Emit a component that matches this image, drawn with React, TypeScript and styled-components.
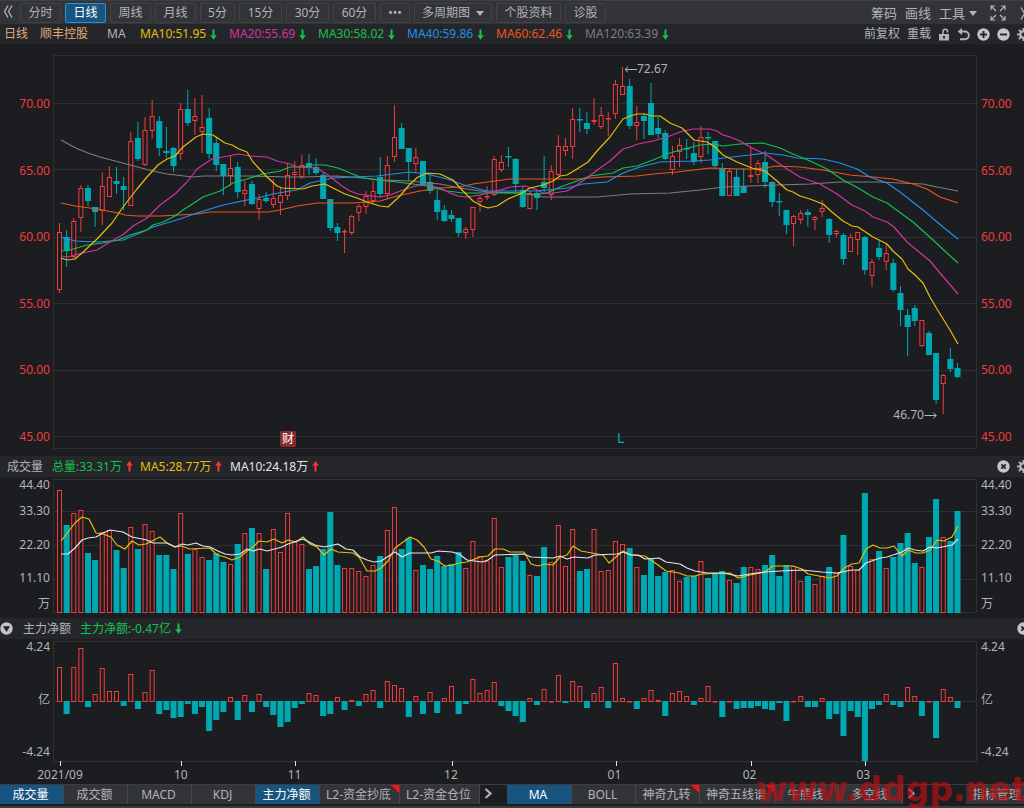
import React from "react";
import styled, { createGlobalStyle } from "styled-components";

const c = {
  bg: "#1c1d21",
  bar: "#333438",
  strip: "#25262a",
  line: "#2e3034",
  text: "#b2b3b7",
  red: "#f23b3b",
  teal: "#00a8b2",
  green: "#12c24e",
  yellow: "#e6be0a",
  magenta: "#d2349f",
  blue: "#2090e8",
  orange: "#ea5620",
  grey: "#7c7e82",
  white: "#e4e5e8",
  active: "#185480",
};

const GlobalStyle = createGlobalStyle`
  * { box-sizing: border-box; }
  body {
    margin: 0;
    background: ${c.bg};
    color: ${c.text};
    font: 12px/16px "Noto Sans", "Noto Sans CJK SC", sans-serif;
  }
  button, select { font: inherit; color: inherit; }
`;

/* ---------- data: one entry per trading session ---------- */

type Session = [up: 0 | 1, high: number, top: number, bottom: number, low: number];

const sessions: Session[] = [
  [1, 223, 232, 290, 293], [0, 230, 237, 251, 267], [1, 218, 221, 257, 259], [1, 185, 188, 218, 232],
  [0, 185, 188, 201, 206], [0, 207, 207, 212, 227], [1, 172, 186, 211, 225], [1, 166, 177, 197, 197],
  [0, 167, 181, 184, 194], [0, 177, 186, 190, 210], [1, 132, 141, 206, 206], [0, 122, 138, 159, 161],
  [1, 117, 130, 165, 166], [1, 100, 116, 131, 139], [0, 116, 121, 148, 156], [0, 127, 151, 153, 158],
  [0, 147, 148, 166, 172], [1, 103, 109, 154, 160], [0, 90, 109, 123, 126], [1, 98, 116, 121, 135],
  [1, 95, 127, 132, 153], [0, 108, 118, 154, 159], [0, 138, 143, 165, 171], [0, 164, 164, 176, 195],
  [1, 155, 168, 176, 186], [0, 162, 167, 192, 198], [1, 181, 190, 194, 206], [0, 181, 184, 204, 205],
  [1, 194, 199, 209, 220], [0, 192, 198, 201, 203], [1, 179, 198, 205, 208], [1, 188, 195, 203, 215],
  [1, 163, 175, 196, 200], [1, 161, 172, 175, 188], [1, 155, 165, 177, 179], [0, 154, 163, 168, 175],
  [0, 158, 167, 173, 175], [0, 173, 175, 199, 199], [0, 199, 199, 228, 231], [0, 223, 227, 233, 241],
  [1, 229, 231, 232, 253], [1, 215, 216, 233, 235], [1, 204, 206, 213, 221], [1, 191, 196, 207, 214],
  [1, 181, 191, 201, 204], [0, 157, 177, 194, 198], [1, 156, 165, 194, 199], [1, 105, 137, 157, 162],
  [0, 123, 128, 149, 149], [0, 148, 148, 162, 181], [1, 148, 157, 164, 172], [0, 161, 161, 185, 186],
  [0, 173, 182, 191, 194], [0, 190, 200, 212, 220], [0, 205, 210, 221, 222], [0, 210, 215, 219, 222],
  [0, 218, 218, 233, 237], [1, 227, 229, 233, 239], [1, 207, 207, 230, 237], [1, 195, 198, 202, 212],
  [1, 186, 196, 197, 200], [1, 156, 159, 195, 196], [1, 155, 162, 170, 172], [0, 147, 156, 157, 167],
  [0, 158, 159, 184, 193], [0, 186, 190, 207, 208], [1, 191, 193, 209, 209], [0, 190, 193, 198, 210],
  [0, 156, 182, 188, 192], [1, 165, 171, 195, 200], [1, 135, 146, 175, 176], [1, 138, 146, 151, 156],
  [1, 108, 119, 147, 159], [0, 108, 119, 120, 132], [0, 112, 123, 129, 134], [1, 98, 120, 122, 125],
  [1, 107, 115, 127, 129], [1, 112, 118, 119, 136], [1, 80, 84, 114, 119], [1, 67, 86, 95, 95],
  [0, 79, 86, 126, 129], [1, 106, 122, 126, 140], [0, 113, 116, 121, 139], [0, 83, 103, 135, 135],
  [0, 117, 128, 134, 138], [0, 130, 133, 159, 160], [1, 146, 156, 170, 175], [1, 138, 145, 152, 167],
  [0, 139, 148, 149, 159], [0, 142, 153, 162, 165], [1, 126, 137, 157, 163], [0, 132, 137, 138, 154],
  [0, 141, 141, 166, 169], [0, 163, 169, 196, 196], [1, 169, 171, 196, 196], [0, 169, 177, 196, 196],
  [0, 168, 186, 193, 193], [1, 147, 175, 177, 183], [1, 160, 163, 175, 183], [0, 151, 162, 182, 188],
  [0, 181, 182, 202, 207], [0, 193, 201, 202, 216], [0, 210, 210, 225, 234], [1, 215, 216, 224, 246],
  [1, 210, 213, 220, 224], [0, 209, 212, 215, 227], [1, 216, 217, 220, 230], [1, 200, 208, 212, 217],
  [0, 218, 219, 235, 243], [1, 230, 231, 234, 237], [0, 233, 235, 259, 265], [1, 234, 237, 252, 252],
  [1, 232, 232, 240, 255], [0, 236, 237, 270, 275], [1, 259, 262, 276, 287], [0, 241, 248, 257, 260],
  [1, 244, 253, 262, 270], [0, 259, 263, 290, 292], [0, 286, 293, 310, 326], [0, 309, 315, 327, 356],
  [0, 305, 308, 321, 326], [1, 320, 320, 346, 347], [0, 331, 333, 355, 355], [0, 353, 353, 400, 404],
  [1, 374, 375, 384, 414], [0, 348, 359, 369, 372], [0, 363, 368, 377, 378],
];

const volumeTops = [
  490, 525, 513, 510, 553, 560, 532, 530, 550, 568, 527, 549, 524, 531, 555, 555, 569, 513, 554, 549,
  557, 560, 553, 562, 564, 544, 533, 528, 533, 569, 529, 552, 513, 542, 544, 569, 566, 549, 512, 565,
  568, 568, 571, 576, 565, 556, 530, 507, 549, 538, 570, 565, 569, 556, 566, 564, 552, 568, 541, 556,
  561, 518, 567, 557, 555, 561, 575, 576, 547, 562, 525, 566, 529, 571, 569, 529, 571, 570, 541, 544,
  548, 567, 575, 559, 576, 572, 570, 581, 577, 576, 561, 578, 573, 571, 580, 583, 567, 567, 569, 565,
  555, 576, 565, 566, 581, 576, 584, 576, 567, 573, 535, 566, 570, 493, 559, 551, 568, 557, 543, 533,
  563, 567, 537, 499, 537, 541, 511,
];

const netFlow = [
  34, -13, 34, 53, -6, 7, 33, 10, 10, -5, 27, -8, 9, 31, -13, -9, -17, -16, -3, -13, -6, -30, -19, -11,
  4, -19, 6, -11, 7, -6, -14, -26, -21, -7, -3, 8, 6, -15, -13, 4, -9, 1, -5, 7, 11, -7, 20, 16, 13,
  -16, 5, -13, 9, -12, 3, 15, -13, -3, 22, 8, 11, 19, -5, -10, -15, -21, 3, -4, 12, 0, 26, -2, 20, 15,
  -7, 8, 14, -7, 38, 3, 0, -8, 3, 11, 1, -15, 8, 10, 5, -4, 3, 15, 0, -16, 0, -8, -7, -7, -5, -8, -9,
  -2, -20, 0, 5, -6, -6, 3, -18, -13, -35, -10, -16, -60, -8, -4, 7, -4, -6, 14, 5, -15, 0, -37, 12,
  4, -7,
];

const priceLines: [string, string][] = [
  [c.grey, "61,140 72,146 78,149 88,153 100,157 130,165 153,171 167,174 193,177 203,176 250,176 290,177 303,177 337,176 363,178 383,180 410,181 440,184 460,188 487,192 520,193 530,194 543,197 560,197 597,197 630,194 670,193 700,190 723,187 750,186 777,185 810,184 840,182 880,182 900,183 923,184 937,187 958,191"],
  [c.orange, "61,203 75,206 97,209 118,213 125,215 137,216 160,216 197,214 210,212 240,212 268,212 280,210 297,206 317,203 353,203 380,201 397,196 420,191 440,188 460,187 473,184 510,179 540,179 577,179 603,177 637,176 653,174 677,172 710,168 740,169 757,169 777,166 800,167 823,170 850,175 873,177 893,179 913,184 927,189 940,197 958,203"],
  [c.blue, "61,237 75,241 97,242 123,240 140,233 153,227 180,219 197,213 223,205 257,198 273,194 290,191 297,190 310,183 333,178 353,177 377,176 393,174 410,172 427,174 447,179 467,186 487,191 520,191 533,191 547,190 567,188 583,184 607,182 623,173 640,167 660,162 693,161 710,160 723,158 750,155 765,153 783,155 797,158 823,159 840,163 857,169 870,177 887,183 900,192 923,210 943,227 958,239"],
  [c.green, "61,251 70,250 87,245 103,243 118,240 130,235 147,230 153,225 163,222 175,216 183,210 197,201 203,197 220,191 233,183 247,179 263,174 280,171 290,167 302,167 310,165 325,165 338,168 350,173 363,178 377,180 397,182 413,184 427,186 447,191 463,193 487,193 520,193 533,195 547,193 560,187 577,181 590,176 613,173 623,168 637,166 653,160 667,154 680,150 700,145 713,144 723,146 740,144 763,143 780,148 793,154 810,161 827,169 843,180 860,189 873,197 887,203 902,214 913,222 933,240 947,253 958,263"],
  [c.magenta, "61,256 68,257 78,254 97,250 110,242 124,234 133,226 147,218 160,205 175,194 187,182 197,169 212,159 223,157 238,154 250,156 267,157 277,161 290,164 297,167 317,168 328,175 342,186 350,191 358,194 380,197 390,195 403,190 415,186 427,185 440,188 450,193 458,196 467,197 480,195 497,191 510,187 525,186 535,189 543,193 553,193 567,191 577,185 588,177 600,168 610,161 623,149 630,147 638,144 653,141 667,137 683,131 693,129 710,129 717,131 723,135 730,137 740,141 752,148 765,154 777,162 787,169 800,177 820,184 837,194 852,205 865,211 873,217 887,222 894,227 907,242 930,261 940,273 958,294"],
  [c.yellow, "61,258 67,260 75,259 82,253 97,239 112,223 123,207 137,189 147,177 158,165 167,159 175,156 183,147 196,137 203,134 213,135 225,143 232,145 239,149 247,152 253,162 267,177 277,186 282,188 303,189 312,186 325,184 335,189 345,194 357,198 367,202 380,206 388,207 400,196 410,184 418,177 427,173 440,174 453,180 463,191 473,201 482,206 488,208 497,206 508,199 520,194 530,188 543,185 553,181 560,176 567,175 577,169 588,162 597,151 610,137 623,119 630,116 637,114 645,114 652,116 660,116 670,123 682,128 694,140 707,142 715,147 723,155 737,162 752,168 765,171 777,181 787,190 793,192 800,196 810,199 823,204 832,212 843,221 852,226 858,227 873,237 887,244 893,251 902,259 908,269 915,275 923,283 930,297 937,309 950,330 958,344"],
];

const volumeLines: [string, string][] = [
  [c.yellow, "61,541 68,532 75,523 82,517 89,519 96,533 103,534 111,537 117,545 125,549 132,541 139,545 146,544 160,537 167,543 175,547 182,546 189,549 210,548 217,555 225,557 232,560 240,557 247,551 253,547 259,541 267,542 274,539 282,543 288,540 296,542 303,537 310,544 317,547 324,555 331,549 338,552 353,553 359,557 367,571 375,571 381,568 388,561 395,548 410,537 417,540 424,547 431,559 438,561 445,566 453,565 459,563 467,562 480,557 488,556 495,549 503,549 510,552 524,552 531,564 538,566 545,564 553,565 560,557 567,555 573,546 581,551 603,555 609,563 623,551 631,555 645,556 658,565 666,571 679,573 687,576 695,576 702,574 730,573 738,578 750,575 765,572 773,566 793,566 802,569 808,574 830,578 837,576 844,568 852,564 859,563 866,549 873,545 880,548 887,548 894,546 902,556 908,550 916,553 923,553 930,550 937,540 944,541 952,537 958,526"],
  [c.white, "61,554 68,554 75,548 82,540 88,538 96,537 103,533 110,530 123,532 132,537 147,540 153,543 167,543 175,547 182,544 188,545 196,543 203,546 210,547 218,551 225,554 232,555 240,554 247,549 253,551 260,549 267,551 282,547 288,544 303,539 315,545 324,547 338,544 346,549 353,550 360,557 367,560 374,562 381,561 395,552 402,557 410,553 431,553 438,551 452,552 459,554 467,560 482,562 488,560 495,555 524,554 531,557 553,558 560,556 567,559 574,557 588,558 595,555 617,554 623,552 631,555 638,555 645,559 659,558 666,562 680,564 687,568 695,571 707,573 723,573 738,576 750,574 765,572 780,571 802,570 822,572 837,573 852,570 859,570 866,563 880,558 887,557 902,552 908,548 915,550 923,551 930,547 937,548 952,545 958,539"],
];

const months = [
  { label: "2021/09", days: 17 },
  { label: "10", days: 16 },
  { label: "11", days: 22 },
  { label: "12", days: 23 },
  { label: "01", days: 19 },
  { label: "02", days: 16 },
  { label: "03", days: 16 },
];
const tickXs = [60.5, 181.5, 295.5, 452.5, 616.5, 751.5, 865.5];

/* The plots share one horizontal scale. */
const LEFT = 53;
const WIDTH = 924;
const sessionX = (i: number) => 59.5 + i * 7.127;
const pct = (x: number) => `${((x - LEFT) / WIDTH) * 100}%`;

/* ---------- layout ---------- */

const Page = styled.main`
  display: flex;
  flex-direction: column;
  min-height: 100vh;
  overflow-x: clip;
  background: ${c.bg};
  border-bottom: 2px solid #3b3c40;
`;

const Toolbar = styled.header`
  display: flex;
  align-items: center;
  gap: 4px;
  height: 24px;
  padding-top: 1px;
  overflow: hidden;
  background: ${c.bar};
  border-top: 1px solid #3f4044;
`;

const Collapse = styled.button`
  width: 16px;
  height: 20px;
  padding: 0;
  border: 0;
  background: none;
`;

const Period = styled.button<{ $w: number; $on?: boolean }>`
  flex: none;
  width: ${(p) => p.$w}px;
  height: 20px;
  padding: 0;
  line-height: 16px;
  white-space: nowrap;
  color: ${(p) => (p.$on ? "#fff" : c.text)};
  background: ${(p) => (p.$on ? c.active : "transparent")};
  border: 1px solid ${(p) => (p.$on ? "#2a90d8" : "#414246")};
  border-radius: 2px;
`;

const SelectBox = styled.label`
  display: flex;
  flex: none;
  align-items: center;
  width: 78px;
  height: 20px;
  padding: 0 7px;
  border: 1px solid #414246;
  border-radius: 2px;

  select {
    width: 54px;
    flex: none;
    padding: 0;
    border: 0;
    appearance: none;
    background: none;
  }
`;

const Tools = styled.div<{ $gap: number }>`
  display: flex;
  flex: none;
  align-items: center;
  gap: ${(p) => p.$gap}px;
  margin-left: auto;
  margin-right: -6px;
`;

const WindowTools = styled.div`
  display: flex;
  gap: 14px;
  padding-left: 5px;
`;

const Tool = styled.button<{ $large?: boolean }>`
  display: flex;
  flex: none;
  align-items: center;
  gap: 4px;
  padding: 0;
  border: 0;
  background: none;
  font-size: ${(p) => (p.$large ? 13 : 12)}px;
  white-space: nowrap;
`;

const Strip = styled.div<{ $indent: number }>`
  display: flex;
  align-items: center;
  height: ${(p) => (p.$indent === 4 ? 20 : 21)}px;
  padding-left: ${(p) => p.$indent}px;
  overflow: hidden;
  white-space: nowrap;
  background: ${c.strip};
`;

const StripText = styled.span<{ $w: number; $tone?: string }>`
  flex: none;
  width: ${(p) => p.$w}px;
  color: ${(p) => p.$tone ?? c.text};
`;

const Reading = styled(StripText)`
  display: flex;
  align-items: center;
  gap: 4px;
`;

const Panel = styled.section<{ $h: number }>`
  display: grid;
  grid-template-columns: ${LEFT}px minmax(0, 1fr) 47px;
  height: ${(p) => p.$h}px;
`;

const Axis = styled.div<{ $right?: boolean }>`
  display: flex;
  flex-direction: column;
  justify-content: space-between;
  padding: ${(p) => (p.$right ? "0 0 0 4px" : "0 3px 0 0")};
  text-align: ${(p) => (p.$right ? "left" : "right")};
`;

const PriceAxis = styled(Axis)`
  padding-top: 52px;
  padding-bottom: 11px;
  color: ${c.red};
`;

const VolumeAxis = styled(Axis)`
  display: grid;
  grid-template-columns: 1fr;
  grid-template-rows: 16px 36px 32px 34px 18px;
  align-items: center;
  align-content: start;
`;

const FlowAxis = styled(Axis)`
  padding-bottom: 7px;
`;

const Plot = styled.div`
  position: relative;
`;

const Chart = styled.svg`
  display: block;
  width: 100%;
  height: 100%;
`;

const Note = styled.span<{ $y: number; $before?: boolean }>`
  position: absolute;
  top: ${(p) => p.$y}px;
  display: flex;
  align-items: center;
  color: ${c.text};
  transform: ${(p) => (p.$before ? "translateX(-100%)" : "none")};
`;

const Badge = styled.span`
  position: absolute;
  bottom: 9px;
  width: 16px;
  height: 16px;
  line-height: 16px;
  text-align: center;
  color: #fff;
  background: #8a2a2c;
  border-radius: 2px;
`;

const Marker = styled.span`
  position: absolute;
  bottom: 10px;
  color: ${c.teal};
  font-size: 14px;
`;

const Months = styled.div`
  display: flex;
  height: 17px;
  padding: 0 47px 0 60px;
`;

const Month = styled.span`
  display: flex;
  flex-basis: 0;
  min-width: 0;

  span {
    display: flex;
    justify-content: center;
    width: 0;
    line-height: 16px;
  }
`;

const Footer = styled.footer`
  position: relative;
  margin-bottom: 2px;
`;

const Tabs = styled.nav`
  display: flex;
  height: 20px;
  overflow: hidden;
  border-top: 1px solid #3c3d41;
`;

const Tab = styled.button<{ $w: number; $on?: boolean; $hot?: boolean }>`
  position: relative;
  flex: none;
  width: ${(p) => p.$w}px;
  height: 19px;
  padding: 0 2px 0 0;
  line-height: 18px;
  white-space: nowrap;
  border: 0;
  border-right: 1px solid #47484c;
  color: ${(p) => (p.$on ? "#fff" : c.text)};
  background: ${(p) => (p.$on ? c.active : c.bar)};

  &::after {
    content: "";
    display: ${(p) => (p.$hot ? "block" : "none")};
    position: absolute;
    top: 0;
    right: 0;
    border-top: 8px solid #ff1010;
    border-left: 8px solid transparent;
  }
`;

const NextTabs = styled.button<{ $w: number }>`
  flex: none;
  width: ${(p) => p.$w}px;
  padding: 0 0 0 4px;
  border: 0;
  background: none;
  text-align: left;
`;

const Manage = styled(Tab)`
  margin-left: auto;
  margin-right: -6px;
`;

const SiteMark = styled.span`
  position: absolute;
  right: -3px;
  bottom: -6px;
  z-index: 1;
  font: bold 33px/40px "DejaVu Sans", sans-serif;
  color: rgba(190, 14, 18, 0.68);
  pointer-events: none;
`;

/* ---------- icons ---------- */

const Trend = ({ up }: { up?: boolean }) => (
  <svg width="7" height="11" viewBox="0 0 7 11" aria-hidden="true">
    <path
      d={up ? "M3.5 0 L6.8 4.5 H4.5 V10.5 H2.5 V4.5 H.2 Z" : "M3.5 10.8 L6.8 6.3 H4.5 V.5 H2.5 V6.3 H.2 Z"}
      fill={up ? "#ff3434" : c.green}
    />
  </svg>
);

const Caret = () => (
  <svg width="8" height="5" viewBox="0 0 8 5" aria-hidden="true">
    <path d="M0 0 H8 L4 5 Z" fill={c.text} />
  </svg>
);

const Guillemet = ({ right }: { right?: boolean }) => (
  <svg width="10" height="13" viewBox="0 0 10 13" fill="none" stroke={c.text} strokeWidth="1.3" aria-hidden="true">
    <path d={right ? "M1 .5 L4.5 6.5 L1 12.5 M5 .5 L8.5 6.5 L5 12.5" : "M5 .5 L1.5 6.5 L5 12.5 M9 .5 L5.5 6.5 L9 12.5"} />
  </svg>
);

const Chevron = () => (
  <svg width="9" height="11" viewBox="0 0 9 11" fill="none" stroke={c.text} strokeWidth="2.2" aria-hidden="true">
    <path d="M1.5 1 L6.5 5.5 L1.5 10" />
  </svg>
);

const Expand = () => (
  <svg width="16" height="16" viewBox="0 0 16 16" fill="none" stroke={c.text} strokeWidth="1.2" aria-hidden="true">
    <path d="M1 5V1H5M1 1L6 6M11 1H15V5M15 1L10 6M1 11V15H5M1 15L6 10M11 15H15V11M15 15L10 10" />
  </svg>
);

const Unlock = () => (
  <svg width="12" height="13" viewBox="0 0 12 13" aria-hidden="true">
    <path d="M5 6 V3.5 A2.3 2.3 0 0 1 9.6 3.5 V4.5" fill="none" stroke={c.text} strokeWidth="1.5" />
    <path d="M1 6 H11 V12.5 H1 Z M5 8 V10.5 H7 V8 Z" fill={c.text} fillRule="evenodd" />
  </svg>
);

const Undo = () => (
  <svg width="13" height="13" viewBox="0 0 13 13" aria-hidden="true">
    <path d="M3 3.5 H8 A3.8 3.8 0 0 1 8 11.2 H3" fill="none" stroke={c.text} strokeWidth="1.9" />
    <path d="M5 0 V7 L.6 3.5 Z" fill={c.text} />
  </svg>
);

const Round = ({ sign }: { sign: "plus" | "minus" | "close" | "down" }) => {
  const marks = {
    plus: "M3 6.5 H10 M6.5 3 V10",
    minus: "M3 6.5 H10",
    close: "M4.3 4.3 L8.7 8.7 M8.7 4.3 L4.3 8.7",
    down: "M4.6 5.2 H8.4 L6.5 8.2 Z",
  };
  return (
    <svg width="13" height="13" viewBox="0 0 13 13" aria-hidden="true">
      <circle cx="6.5" cy="6.5" r="6.2" fill="#c4c5c8" />
      <path d={marks[sign]} fill="none" stroke={c.strip} strokeWidth="1.9" />
    </svg>
  );
};

const Gear = () => (
  <svg width="13" height="13" viewBox="0 0 13 13" fill="none" stroke={c.text} aria-hidden="true">
    <circle cx="6.5" cy="6.5" r="3.2" strokeWidth="2.4" />
    <path d="M6.5 0V3M6.5 10V13M0 6.5H3M10 6.5H13M1.9 1.9L4 4M9 9L11.1 11.1M1.9 11.1L4 9M9 4L11.1 1.9" strokeWidth="2" />
  </svg>
);

const Pointer = ({ right }: { right?: boolean }) => (
  <svg width="13" height="7" viewBox="0 0 13 7" fill="none" stroke={c.text} aria-hidden="true">
    <path d={right ? "M0 3.5H12M9 .8L12 3.5L9 6.2" : "M13 3.5H1M4 .8L1 3.5L4 6.2"} />
  </svg>
);

/* ---------- charts ---------- */

const Frame = ({ top, bottom, rows }: { top: number; bottom: number; rows: number[] }) => (
  <g stroke={c.line} fill="none">
    <rect x={53.5} y={top} width={923} height={bottom - top} />
    {rows.map((y) => (
      <line key={y} x1={54} x2={976} y1={y} y2={y} />
    ))}
  </g>
);

const Lines = ({ lines }: { lines: [string, string][] }) => (
  <g fill="none" strokeWidth={1.2} strokeLinejoin="round">
    {lines.map(([tone, points]) => (
      <polyline key={tone} points={points} stroke={tone} />
    ))}
  </g>
);

const Bar = ({ i, up, top, bottom }: { i: number; up: boolean; top: number; bottom: number }) => (
  <rect
    x={sessionX(i) - (up ? 2 : 2.5)}
    y={top + 0.5}
    width={up ? 4 : 5}
    height={Math.max(bottom - top - 1, 0.5)}
    fill={up ? c.bg : c.teal}
    stroke={up ? c.red : c.teal}
  />
);

const PriceChart = () => (
  <Chart viewBox={`${LEFT} 44 ${WIDTH} 412`} preserveAspectRatio="none" role="img" aria-label="日线">
    <Frame top={55.5} bottom={448.5} rows={[103.5, 169.5, 237.5, 303.5, 370.5, 436.5]} />
    {sessions.map(([up, high, top, bottom, low], i) => (
      <g key={i}>
        <line x1={sessionX(i)} x2={sessionX(i)} y1={high} y2={low} stroke={up ? c.red : c.teal} />
        <Bar i={i} up={up === 1} top={top} bottom={bottom} />
      </g>
    ))}
    <Lines lines={priceLines} />
  </Chart>
);

const VolumeChart = () => (
  <Chart viewBox={`${LEFT} 477 ${WIDTH} 141`} preserveAspectRatio="none" role="img" aria-label="成交量">
    <Frame top={479.5} bottom={612.5} rows={[511.5, 545.5, 579.5]} />
    {volumeTops.map((top, i) => (
      <Bar key={i} i={i} up={sessions[i][0] === 1} top={top} bottom={613} />
    ))}
    <Lines lines={volumeLines} />
  </Chart>
);

const FlowChart = () => (
  <Chart viewBox={`${LEFT} 639 ${WIDTH} 128`} preserveAspectRatio="none" role="img" aria-label="主力净额">
    <Frame top={641.5} bottom={761.5} rows={[701.5]} />
    {netFlow.map((v, i) => (
      <Bar key={i} i={i} up={v >= 0} top={v >= 0 ? 701 - v : 701} bottom={v >= 0 ? 702 : 701 - v} />
    ))}
    {tickXs.map((x) => (
      <line key={x} x1={x} x2={x} y1={761} y2={766} stroke={c.white} />
    ))}
  </Chart>
);

const Labels = ({ items }: { items: string[] }) => (
  <>
    {items.map((t) => (
      <span key={t}>{t}</span>
    ))}
  </>
);

const prices = ["70.00", "65.00", "60.00", "55.00", "50.00", "45.00"];
const volumes = ["44.40", "33.30", "22.20", "11.10", "万"];
const flows = ["4.24", "亿", "-4.24"];

const periods: [string, number][] = [
  ["分时", 41], ["日线", 41], ["周线", 41], ["月线", 41], ["5分", 35], ["15分", 43], ["30分", 43], ["60分", 43], ["•••", 30],
];

const averages: [string, string][] = [
  ["MA10:51.95", c.yellow], ["MA20:55.69", c.magenta], ["MA30:58.02", c.green],
  ["MA40:59.86", c.blue], ["MA60:62.46", c.orange], ["MA120:63.39", c.grey],
];

export default function App() {
  return (
    <Page>
      <GlobalStyle />
      <Toolbar>
        <Collapse aria-label="收起"><Guillemet /></Collapse>
        {periods.map(([t, w]) => (
          <Period key={t} $w={w} $on={t === "日线"}>{t}</Period>
        ))}
        <SelectBox>
          <select aria-label="多周期图"><option>多周期图</option></select>
          <Caret />
        </SelectBox>
        <Period $w={65}>个股资料</Period>
        <Period $w={41}>诊股</Period>
        <Tools $gap={8}>
          <Tool $large>筹码</Tool>
          <Tool $large>画线</Tool>
          <Tool $large aria-haspopup="menu">工具<Caret /></Tool>
          <WindowTools>
            <Tool aria-label="全屏"><Expand /></Tool>
            <Tool aria-label="展开"><Guillemet right /></Tool>
          </WindowTools>
        </Tools>
      </Toolbar>

      <Strip $indent={4}>
        <StripText $w={36} $tone="#e0aa78">日线</StripText>
        <StripText $w={67} $tone="#e0aa78">顺丰控股</StripText>
        <StripText $w={33}>MA</StripText>
        {averages.map(([t, tone]) => (
          <Reading key={t} $w={89} $tone={tone}>{t}<Trend /></Reading>
        ))}
        <Tools $gap={7}>
          <Tool>前复权</Tool>
          <Tool>重载</Tool>
          <Tool aria-label="解锁"><Unlock /></Tool>
          <Tool aria-label="撤销"><Undo /></Tool>
          <Tool aria-label="放大"><Round sign="plus" /></Tool>
          <Tool aria-label="缩小"><Round sign="minus" /></Tool>
          <Tool aria-label="设置"><Gear /></Tool>
        </Tools>
      </Strip>

      <Panel $h={412}>
        <PriceAxis><Labels items={prices} /></PriceAxis>
        <Plot>
          <PriceChart />
          <Note $y={17} style={{ left: pct(624) }}><Pointer />72.67</Note>
          <Note $y={363} $before style={{ left: pct(937) }}>46.70<Pointer right /></Note>
          <Badge style={{ left: pct(280) }}>财</Badge>
          <Marker style={{ left: pct(617) }}>L</Marker>
        </Plot>
        <PriceAxis $right><Labels items={prices} /></PriceAxis>
      </Panel>

      <Strip $indent={7}>
        <StripText $w={45}>成交量</StripText>
        <Reading $w={88} $tone={c.green}>总量:33.31万<Trend up /></Reading>
        <Reading $w={90} $tone={c.yellow}>MA5:28.77万<Trend up /></Reading>
        <Reading $w={90} $tone={c.white}>MA10:24.18万<Trend up /></Reading>
        <Tools $gap={7}>
          <Tool aria-label="关闭成交量"><Round sign="close" /></Tool>
          <Tool aria-label="设置成交量"><Gear /></Tool>
        </Tools>
      </Strip>

      <Panel $h={141}>
        <VolumeAxis><Labels items={volumes} /></VolumeAxis>
        <Plot><VolumeChart /></Plot>
        <VolumeAxis $right><Labels items={volumes} /></VolumeAxis>
      </Panel>

      <Strip $indent={0}>
        <StripText $w={23}>
          <Tool aria-label="选择指标"><Round sign="down" /></Tool>
        </StripText>
        <StripText $w={57}>主力净额</StripText>
        <Reading $w={110} $tone={c.green}>主力净额:-0.47亿<Trend /></Reading>
        <Tools $gap={7}>
          <Tool aria-label="关闭主力净额"><Round sign="close" /></Tool>
        </Tools>
      </Strip>

      <Panel $h={128}>
        <FlowAxis><Labels items={flows} /></FlowAxis>
        <Plot><FlowChart /></Plot>
        <FlowAxis $right><Labels items={flows} /></FlowAxis>
      </Panel>

      <Months>
        {months.map((m) => (
          <Month key={m.label} style={{ flexGrow: m.days }}><span>{m.label}</span></Month>
        ))}
      </Months>

      <Footer>
        <Tabs>
          <Tab $w={64} $on>成交量</Tab>
          <Tab $w={64}>成交额</Tab>
          <Tab $w={64}>MACD</Tab>
          <Tab $w={64}>KDJ</Tab>
          <Tab $w={64} $on>主力净额</Tab>
          <Tab $w={80} $hot>L2-资金抄底</Tab>
          <Tab $w={80}>L2-资金仓位</Tab>
          <NextTabs $w={27} aria-label="更多副图指标"><Chevron /></NextTabs>
          <Tab $w={65} $on>MA</Tab>
          <Tab $w={64}>BOLL</Tab>
          <Tab $w={64} $hot>神奇九转</Tab>
          <Tab $w={75} $hot>神奇五线谱</Tab>
          <Tab $w={64}>牛熊线</Tab>
          <Tab $w={64}>多空线</Tab>
          <NextTabs $w={20} aria-label="更多主图指标"><Chevron /></NextTabs>
          <Manage $w={64}>指标管理</Manage>
        </Tabs>
        <SiteMark>www.ddgp.net</SiteMark>
      </Footer>
    </Page>
  );
}
